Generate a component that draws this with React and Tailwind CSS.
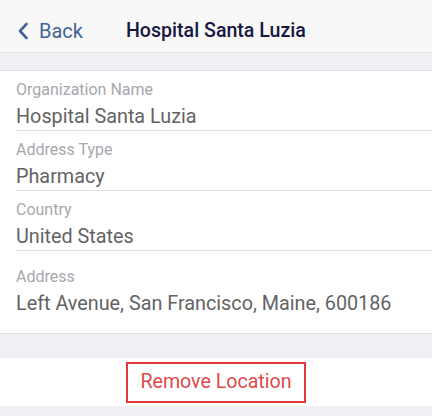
import React from "react";

function Field({ label, value, className = "", valueClass = "mt-[6px]", last = false }) {
  return (
    <div className={`ml-4 ${last ? "" : "border-b border-[#e2e2e2]"} ${className}`}>
      <div className="text-[16px] leading-[18px] text-[#a7a7ad]">{label}</div>
      <div className={`${valueClass} text-[19.8px] leading-[24px] text-[#636365]`}>{value}</div>
    </div>
  );
}

export default function App() {
  return (
    <div className="w-[432px] h-[416px] bg-[#efeff4] overflow-hidden" style={{ fontFamily: "Roboto, 'Noto Sans', sans-serif" }}>
      <header className="h-[53px] pt-[10px] bg-[#f8f8f8] border-b border-[#e4e4e6] flex items-center">
        <div className="flex items-center pl-[17px] text-[#3f6595]">
          <svg width="12" height="18" viewBox="0 0 12 18" className="mr-[10px]">
            <path d="M9.5 2 L3 9 L9.5 16" fill="none" stroke="#3f6595" strokeWidth="2.6" strokeLinecap="round" strokeLinejoin="round" />
          </svg>
          <span className="text-[20px]">Back</span>
        </div>
        <div className="ml-[43px] text-[19.6px] font-medium text-[#191743]">Hospital Santa Luzia</div>
      </header>
      <div className="h-[17px]" />
      <section className="bg-white border-t border-b border-[#e2e2e2]">
        <Field label="Organization Name" value="Hospital Santa Luzia" className="pt-[10px] pb-[1px]" />
        <Field label="Address Type" value="Pharmacy" className="pt-[10px] pb-[1px]" />
        <Field label="Country" value="United States" className="pt-[10px] pb-[1px]" />
        <Field label="Address" value="Left Avenue, San Francisco, Maine, 600186" className="pt-[17px] pb-[17px]" valueClass="mt-[6px]" last />
      </section>
      <div className="h-[24px]" />
      <section className="bg-white h-[48px] flex items-center justify-center">
        <button className="w-[180px] h-[41px] border-2 border-[#e4393c] text-[#e04a4d] text-[19.6px]">Remove Location</button>
      </section>
    </div>
  );
}
